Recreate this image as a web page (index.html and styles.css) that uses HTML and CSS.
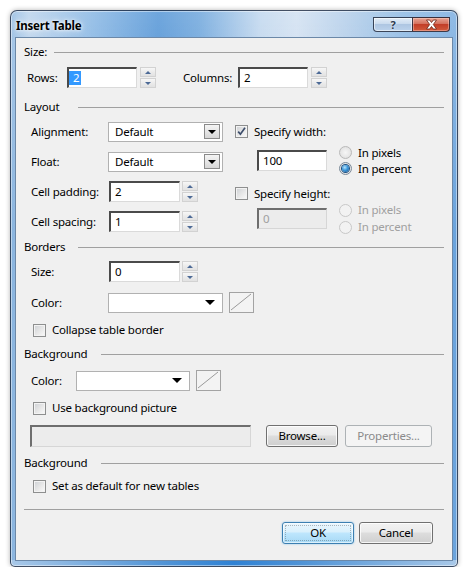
FILE: index.html
```html
<!DOCTYPE html>
<html>
<head>
<meta charset="utf-8">
<title>Insert Table</title>
<link rel="stylesheet" href="styles.css">
</head>
<body>
<div class="window">
  <div class="titlebar">
    <span class="title">Insert Table</span>
    <div class="caption">
      <span class="cbtn help">?</span>
      <span class="cbtn close"><svg width="13" height="11" viewBox="0 0 13 11"><path d="M1.5 1 H4.6 L6.5 3.5 L8.4 1 H11.5 L8.3 5.5 L11.5 10 H8.4 L6.5 7.5 L4.6 10 H1.5 L4.7 5.5 Z" fill="#fff" stroke="#6a2418" stroke-width="0.8"/></svg></span>
    </div>
  </div>
  <div class="client">
    <div class="heading h-size"><span class="htext">Size:</span><span class="hline"></span></div>
    <div class="row rows-row">
      <span class="lbl lbl-rows">Rows:</span>
      <span class="edit"><span class="sel">2</span></span>
      <span class="spin"><span class="up"></span><span class="down"></span></span>
      <span class="lbl lbl-cols">Columns:</span>
      <span class="edit"><span class="val">2</span></span>
      <span class="spin"><span class="up"></span><span class="down"></span></span>
    </div>

    <div class="heading h-layout"><span class="htext">Layout</span><span class="hline"></span></div>
    <div class="layout">
      <div class="lcol">
        <div class="row">
          <span class="lbl lbl-l">Alignment:</span>
          <span class="combo"><span class="ctext">Default</span><span class="dbtn"></span></span>
        </div>
        <div class="row">
          <span class="lbl lbl-l">Float:</span>
          <span class="combo"><span class="ctext">Default</span><span class="dbtn"></span></span>
        </div>
        <div class="row">
          <span class="lbl lbl-l">Cell padding:</span>
          <span class="edit edit-l"><span class="val">2</span></span>
          <span class="spin spin-l"><span class="up"></span><span class="down"></span></span>
        </div>
        <div class="row">
          <span class="lbl lbl-l">Cell spacing:</span>
          <span class="edit edit-l"><span class="val">1</span></span>
          <span class="spin spin-l"><span class="up"></span><span class="down"></span></span>
        </div>
      </div>
      <div class="rcol">
        <div class="row">
          <span class="check checked"><svg width="11" height="11" viewBox="0 0 11 11"><path d="M2.2 5.6 L4.4 8.2 L9 1.8" fill="none" stroke="#3c4d6b" stroke-width="1.7"/></svg></span>
          <span class="clabel">Specify width:</span>
        </div>
        <div class="row r-width">
          <span class="edit edit-r"><span class="val">100</span></span>
          <div class="radios">
            <div class="radio-row"><span class="radio"></span><span class="rlabel">In pixels</span></div>
            <div class="radio-row"><span class="radio on"></span><span class="rlabel">In percent</span></div>
          </div>
        </div>
        <div class="row r-hcheck">
          <span class="check"></span>
          <span class="clabel">Specify height:</span>
        </div>
        <div class="row r-height">
          <span class="edit edit-r disabled"><span class="val">0</span></span>
          <div class="radios radios-2">
            <div class="radio-row"><span class="radio dis"></span><span class="rlabel dim">In pixels</span></div>
            <div class="radio-row"><span class="radio dis"></span><span class="rlabel dim">In percent</span></div>
          </div>
        </div>
      </div>
    </div>

    <div class="heading h-borders"><span class="htext">Borders</span><span class="hline"></span></div>
    <div class="row b-size">
      <span class="lbl lbl-l">Size:</span>
      <span class="edit edit-l"><span class="val">0</span></span>
      <span class="spin spin-l"><span class="up"></span><span class="down"></span></span>
    </div>
    <div class="row b-color">
      <span class="lbl lbl-l">Color:</span>
      <span class="combo"><span class="carrow"></span></span>
      <span class="swatch"><svg width="22" height="18" viewBox="0 0 22 18"><line x1="1" y1="17" x2="21" y2="1" stroke="#9a9a9a" stroke-width="1"/></svg></span>
    </div>
    <div class="crow c-collapse">
      <span class="check"></span>
      <span class="clabel">Collapse table border</span>
    </div>

    <div class="heading h-bg"><span class="htext">Background</span><span class="hline"></span></div>
    <div class="row bg-color">
      <span class="lbl lbl-bg">Color:</span>
      <span class="combo combo-bg"><span class="carrow"></span></span>
      <span class="swatch swatch-bg"><svg width="22" height="18" viewBox="0 0 22 18"><line x1="1" y1="17" x2="21" y2="1" stroke="#9a9a9a" stroke-width="1"/></svg></span>
    </div>
    <div class="crow c-bgpic">
      <span class="check"></span>
      <span class="clabel">Use background picture</span>
    </div>
    <div class="row pic-row">
      <span class="edit edit-pic disabled"></span>
      <span class="btn btn-browse">Browse...</span>
      <span class="btn btn-props disabled">Properties...</span>
    </div>

    <div class="heading h-bg2"><span class="htext">Background</span><span class="hline"></span></div>
    <div class="crow c-default">
      <span class="check"></span>
      <span class="clabel">Set as default for new tables</span>
    </div>

    <div class="sep"></div>
    <div class="buttons">
      <span class="btn btn-ok default"><span class="focus">OK</span></span>
      <span class="btn btn-cancel">Cancel</span>
    </div>
  </div>
</div>
</body>
</html>
```

FILE: styles.css
```css
* { box-sizing: border-box; }

body {
  margin: 0;
  background: #ffffff;
  font-family: "Noto Sans", "Open Sans", "DejaVu Sans", sans-serif;
  font-size: 11.5px;
  letter-spacing: -0.2px;
  color: #000;
}

/* ---------- window frame ---------- */
.window {
  margin: 10px 0 0 10px;
  width: 448px;
  height: 557px;
  border: 1px solid rgba(35, 45, 65, 0.8);
  border-radius: 7px 7px 5px 5px;
  padding: 0 4px 5px 4px;
  display: flex;
  flex-direction: column;
  background:
    linear-gradient(90deg, #a8c8e8 0%, #4f93d6 35%, #2f82d4 50%, #4f93d6 65%, #a8c8e8 100%) bottom / 100% 6px no-repeat,
    linear-gradient(180deg, rgba(255,255,255,0.25) 0%, rgba(255,255,255,0) 40%),
    linear-gradient(90deg, #86b2de 0%, #b2cde9 4%, #7aaee0 18%, #3f88d1 33%, #5b9ad7 42%, #b9d2ec 56%, #cbdcef 64%, #a7c6e6 76%, #7fb0e0 88%, #6aa3dc 100%);
  box-shadow: 0 0 5px rgba(0, 0, 0, 0.3), inset 0 0 0 1px rgba(255, 255, 255, 0.45);
}

.titlebar {
  height: 26px;
  display: flex;
  align-items: flex-start;
  justify-content: space-between;
}

.title {
  padding: 8px 0 0 1px;
  line-height: 14px;
  font-weight: bold;
  color: #000;
  text-shadow: 0 0 6px rgba(255, 255, 255, 0.95), 0 0 3px rgba(255, 255, 255, 0.9);
}

.caption {
  display: flex;
  margin: 6px 3px 0 0;
}

.cbtn {
  height: 15px;
  display: flex;
  align-items: center;
  justify-content: center;
  border: 1px solid rgba(30, 40, 60, 0.85);
}

.help {
  width: 39px;
  border-radius: 0 0 0 4px;
  border-right: none;
  background: linear-gradient(180deg, #e4edf7 0%, #c9dbee 45%, #aec6e2 50%, #bcd3ec 100%);
  box-shadow: inset 0 0 0 1px rgba(255, 255, 255, 0.55);
  font-size: 11px;
  font-weight: bold;
  line-height: 13px;
  color: #2c3a4e;
  text-shadow: 0 0 2px #fff;
}

.close {
  width: 38px;
  border-radius: 0 0 4px 0;
  background: linear-gradient(180deg, #e8a493 0%, #d4705d 45%, #c23e28 50%, #d25a3c 100%);
  box-shadow: inset 0 0 0 1px rgba(255, 210, 200, 0.45);
}

/* ---------- client ---------- */
.client {
  flex: 1;
  border: 1px solid #6b88a8;
  background: #f0f0f0;
  padding: 7px 8px 0 8px;
  display: flex;
  flex-direction: column;
}

.heading {
  height: 14px;
  display: flex;
  align-items: center;
  flex-shrink: 0;
}

.htext {
  line-height: 14px;
  white-space: nowrap;
}

.hline {
  flex: 1;
  height: 1px;
  background: #a0a0a0;
}

.h-size .htext { width: 30px; }
.h-layout .htext,
.h-borders .htext { width: 54px; }
.h-bg .htext,
.h-bg2 .htext { width: 77px; }

.h-layout { margin-top: 12px; }
.h-borders { margin-top: 8px; }
.h-bg { margin-top: 9px; }
.h-bg2 { margin-top: 9px; }

.row {
  height: 21px;
  display: flex;
  align-items: center;
  flex-shrink: 0;
}

.crow {
  height: 16px;
  display: flex;
  align-items: center;
  flex-shrink: 0;
  margin-top: 9px;
}

.lbl { white-space: nowrap; line-height: 14px; }
.lbl-rows { margin-left: 3px; width: 40px; }
.lbl-cols { margin-left: 27px; width: 55px; }
.lbl-l { margin-left: 7px; width: 77px; }
.lbl-bg { margin-left: 7px; width: 45px; }

.rows-row { margin-top: 8px; }

/* ---------- edit boxes ---------- */
.edit {
  width: 70px;
  height: 21px;
  background: #fff;
  border-style: solid;
  border-width: 2px 1px 1px 2px;
  border-color: #4a4a4a #dadada #dadada #4a4a4a;
  display: flex;
  align-items: center;
}

.edit.disabled {
  background: #ececec;
  border-color: #6e6e6e #d6d6d6 #d6d6d6 #6e6e6e;
  color: #a0a0a0;
}

.val {
  padding-left: 4px;
  line-height: 14px;
}

.sel {
  padding: 0 2px 0 4px;
  background: #3399ff;
  color: #fff;
  line-height: 14px;
}

.edit-l { margin-left: 1px; width: 71px; }

.spin {
  margin-left: 3px;
  width: 16px;
  height: 21px;
  display: flex;
  flex-direction: column;
  justify-content: space-between;
}

.spin-l { margin-left: 2px; }

.spin .up,
.spin .down {
  height: 10px;
  border: 1px solid #d2d2d2;
  background: linear-gradient(180deg, #f7f7f7 0%, #ebebeb 50%, #e2e2e2 100%);
  display: flex;
  align-items: center;
  justify-content: center;
}

.spin .up::after {
  content: "";
  border-left: 3px solid transparent;
  border-right: 3px solid transparent;
  border-bottom: 3px solid #4d6a96;
}

.spin .down::after {
  content: "";
  border-left: 3px solid transparent;
  border-right: 3px solid transparent;
  border-top: 3px solid #4d6a96;
}

/* ---------- combos ---------- */
.combo {
  width: 115px;
  height: 20px;
  background: #fff;
  border: 1px solid #b1b1b1;
  display: flex;
  align-items: center;
}

.ctext {
  padding-left: 6px;
  flex: 1;
  line-height: 14px;
}

.dbtn {
  width: 16px;
  height: 15px;
  margin-right: 2px;
  border: 1px solid #8a8a8a;
  background: linear-gradient(180deg, #f4f4f4 0%, #e6e6e6 50%, #d6d6d6 100%);
  display: flex;
  align-items: center;
  justify-content: center;
}

.dbtn::after {
  content: "";
  margin-top: 1px;
  border-left: 4px solid transparent;
  border-right: 4px solid transparent;
  border-top: 4px solid #000;
}

.carrow {
  margin-left: auto;
  margin-right: 7px;
  border-left: 5px solid transparent;
  border-right: 5px solid transparent;
  border-top: 5px solid #000;
}

.combo-bg { width: 114px; }

.swatch {
  margin-left: 6px;
  width: 25px;
  height: 21px;
  border: 1px solid #a3a3a3;
  background: #f3f3f3;
  display: flex;
}

/* ---------- layout section ---------- */
.layout {
  margin-top: 7px;
  display: flex;
  flex-shrink: 0;
}

.lcol {
  width: 211px;
  display: flex;
  flex-direction: column;
  gap: 9px;
}

.rcol {
  display: flex;
  flex-direction: column;
}

.r-width { margin-top: 8px; }
.r-hcheck { margin-top: 12px; }
.r-height { margin-top: 4px; }

.edit-r { margin-left: 22px; width: 70px; }

.radios {
  margin-left: 12px;
  display: flex;
  flex-direction: column;
}

.radio-row {
  height: 16px;
  display: flex;
  align-items: center;
}

.radios-2 .radio-row { height: 17px; }

.radio {
  width: 13px;
  height: 13px;
  border-radius: 50%;
  border: 1px solid #b9b9b9;
  background: radial-gradient(circle at 50% 50%, #f6f6f6 0%, #e6e6e6 60%, #d6d6d6 100%);
  display: flex;
  align-items: center;
  justify-content: center;
}

.radio.on { border-color: #7b8a99; }

.radio.on::after {
  content: "";
  width: 7px;
  height: 7px;
  border-radius: 50%;
  background: radial-gradient(circle at 40% 35%, #b6e4fc 0%, #3d98db 45%, #0f4f8c 100%);
  box-shadow: 0 0 0 1px #1d4f80;
}

.radio.dis {
  border-color: #c8c8c8;
  background: #f2f2f2;
}

.rlabel {
  margin-left: 6px;
  line-height: 14px;
  white-space: nowrap;
}

.dim { color: #a0a0a0; }

/* ---------- checkboxes ---------- */
.check {
  width: 13px;
  height: 13px;
  border: 1px solid #8e8f8f;
  background: linear-gradient(135deg, #cdd0d4 0%, #e8e8e8 55%, #fbfbfb 100%);
  box-shadow: inset 0 0 0 1px #f3f3f3;
  display: flex;
  align-items: center;
  justify-content: center;
}

.c-collapse .check,
.c-bgpic .check,
.c-default .check { margin-left: 9px; }

.clabel {
  margin-left: 6px;
  line-height: 14px;
  white-space: nowrap;
}

/* ---------- borders / background ---------- */
.b-size { margin-top: 7px; }
.b-color { margin-top: 10px; }
.bg-color { margin-top: 9px; }
.pic-row { margin-top: 9px; height: 22px; }

.edit-pic {
  margin-left: 6px;
  width: 221px;
  height: 22px;
}

.c-default { margin-top: 8px; }

/* ---------- buttons ---------- */
.btn {
  height: 22px;
  border: 1px solid #707070;
  border-radius: 3px;
  background: linear-gradient(180deg, #f2f2f2 0%, #ebebeb 45%, #dddddd 50%, #cfcfcf 100%);
  box-shadow: inset 0 0 0 1px rgba(255, 255, 255, 0.8);
  display: flex;
  align-items: center;
  justify-content: center;
  line-height: 14px;
  white-space: nowrap;
}

.btn-browse { margin-left: 15px; width: 72px; }
.btn-props { margin-left: 7px; width: 87px; }

.btn.disabled {
  border-color: #adb2b5;
  background: #f4f4f4;
  box-shadow: none;
  color: #8a8a8a;
}

.sep {
  margin-top: 15px;
  height: 1px;
  background: #a0a0a0;
  flex-shrink: 0;
}

.buttons {
  margin-top: 12px;
  padding-right: 11px;
  display: flex;
  justify-content: flex-end;
  gap: 5px;
}

.btn-ok { width: 72px; }
.btn-cancel { width: 74px; }

.btn.default {
  border-color: #3c7fb1;
  background: linear-gradient(180deg, #eaf6fd 0%, #d9f0fc 45%, #bee6fd 50%, #a7d9f5 100%);
  box-shadow: inset 0 0 0 1px rgba(255, 255, 255, 0.6), 0 0 2px rgba(60, 160, 230, 0.6);
}

.focus {
  align-self: stretch;
  margin: 2px;
  flex: 1;
  display: flex;
  align-items: center;
  justify-content: center;
  border: 1px dotted rgba(0, 0, 0, 0.25);
}
```
